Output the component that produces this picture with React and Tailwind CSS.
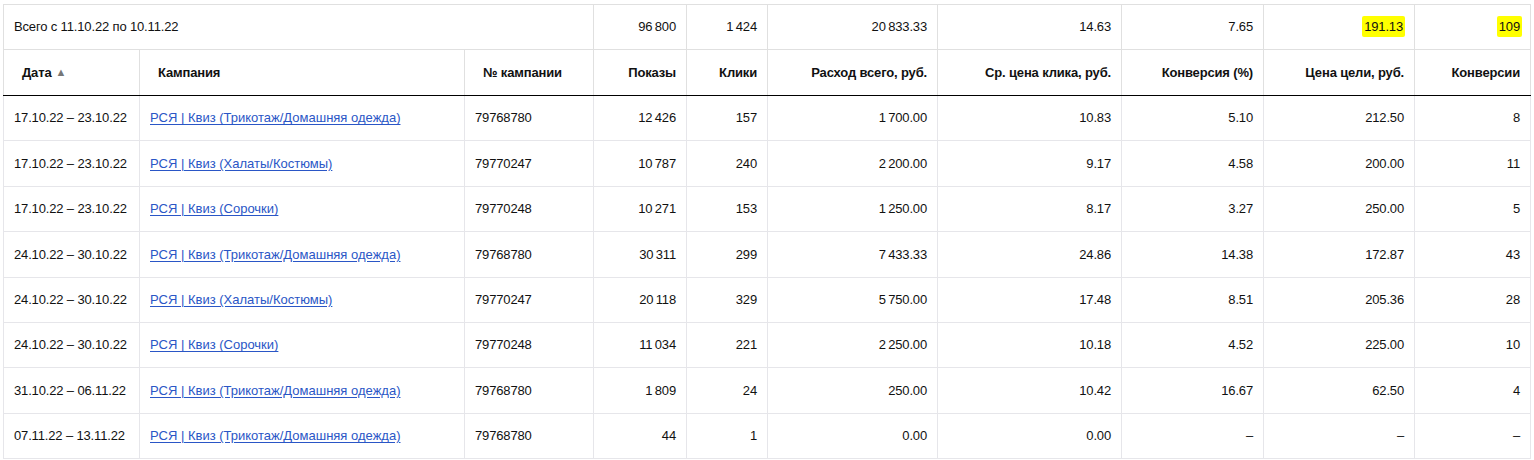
import React from 'react';

const cols = [136, 325, 129, 93, 81, 170, 184, 142, 151, 116];

const headers = [
  { label: 'Дата', align: 'left', sort: true },
  { label: 'Кампания', align: 'left' },
  { label: '№ кампании', align: 'left' },
  { label: 'Показы' },
  { label: 'Клики' },
  { label: 'Расход всего, руб.' },
  { label: 'Ср. цена клика, руб.' },
  { label: 'Конверсия (%)' },
  { label: 'Цена цели, руб.' },
  { label: 'Конверсии' },
];

const KNIT = 'РСЯ | Квиз (Трикотаж/Домашняя одежда)';
const ROBE = 'РСЯ | Квиз (Халаты/Костюмы)';
const SHIRT = 'РСЯ | Квиз (Сорочки)';

// thin space between thousands, as the report prints them
const n = (s) => s.replace(/ /g, '\u2009');

const rows = [
  ['17.10.22 – 23.10.22', KNIT, '79768780', '12 426', '157', '1 700.00', '10.83', '5.10', '212.50', '8'],
  ['17.10.22 – 23.10.22', ROBE, '79770247', '10 787', '240', '2 200.00', '9.17', '4.58', '200.00', '11'],
  ['17.10.22 – 23.10.22', SHIRT, '79770248', '10 271', '153', '1 250.00', '8.17', '3.27', '250.00', '5'],
  ['24.10.22 – 30.10.22', KNIT, '79768780', '30 311', '299', '7 433.33', '24.86', '14.38', '172.87', '43'],
  ['24.10.22 – 30.10.22', ROBE, '79770247', '20 118', '329', '5 750.00', '17.48', '8.51', '205.36', '28'],
  ['24.10.22 – 30.10.22', SHIRT, '79770248', '11 034', '221', '2 250.00', '10.18', '4.52', '225.00', '10'],
  ['31.10.22 – 06.11.22', KNIT, '79768780', '1 809', '24', '250.00', '10.42', '16.67', '62.50', '4'],
  ['07.11.22 – 13.11.22', KNIT, '79768780', '44', '1', '0.00', '0.00', '–', '–', '–'],
];

const totals = ['96 800', '1 424', '20 833.33', '14.63', '7.65'];

function Mark({ children }) {
  return <span className="rounded-[2px] bg-[#ffff00] px-[2px] py-[3px]">{children}</span>;
}

export default function App() {
  return (
    <div className="min-h-screen bg-white pl-[3px] pt-[4px] font-['Liberation_Sans',Arial,sans-serif] text-[13px] tracking-[-0.15px] text-[#111]">
      <table className="w-[1528px] table-fixed border-collapse">
        <colgroup>
          {cols.map((w, i) => (
            <col key={i} style={{ width: w }} />
          ))}
        </colgroup>
        <tbody>
          {/* Totals */}
          <tr className="h-[45px]">
            <td colSpan={3} className="border border-[#e0e0e0] pl-[10px] text-left">
              Всего с 11.10.22 по 10.11.22
            </td>
            {totals.map((t, i) => (
              <td key={i} className="border border-[#e0e0e0] pr-[10px] text-right">
                {n(t)}
              </td>
            ))}
            <td className="border border-[#e0e0e0] pr-[9px] text-right">
              <Mark>191.13</Mark>
            </td>
            <td className="border border-[#e0e0e0] pr-[8px] text-right">
              <Mark>109</Mark>
            </td>
          </tr>

          {/* Header */}
          <tr className="h-[46px]">
            {headers.map((h, i) => (
              <th
                key={i}
                className={`border-x border-t border-x-[#e0e0e0] border-t-[#e0e0e0] border-b border-b-black font-bold ${
                  h.align === 'left' ? 'pl-[18px] text-left' : 'pr-[10px] text-right'
                }`}
              >
                {h.label}
                {h.sort && <span className="ml-[4px] align-[1px] text-[11px] text-[#777]">▲</span>}
              </th>
            ))}
          </tr>

          {/* Data */}
          {rows.map((r, ri) => (
            <tr key={ri} className="h-[45.4px]">
              {r.map((c, ci) => (
                <td
                  key={ci}
                  className={`border border-[#e6e6ea] ${ci < 3 ? 'pl-[10px] text-left' : 'pr-[10px] text-right'}`}
                >
                  {ci === 1 ? (
                    <a href="#" className="tracking-normal text-[#2a56c6] underline underline-offset-[2px]">
                      {c}
                    </a>
                  ) : ci > 2 ? (
                    n(c)
                  ) : (
                    c
                  )}
                </td>
              ))}
            </tr>
          ))}
        </tbody>
      </table>
    </div>
  );
}
